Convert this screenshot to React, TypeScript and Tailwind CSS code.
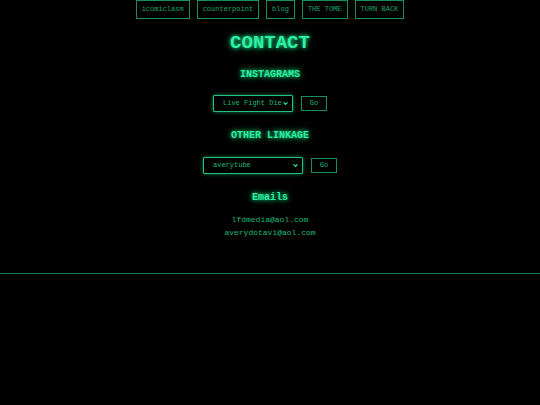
import { ChevronDown } from "lucide-react";

const navItems = ["icomiclasm", "counterpoint", "blog", "THE TOME", "TURN BACK"];

const glow = "[text-shadow:0_0_4px_#19e68c,0_0_8px_rgba(25,230,140,0.5)]";

function LinkPicker({ value, width }: { value: string; width: string }) {
  return (
    <div className="flex items-center justify-center gap-[8px]">
      <div className={`relative flex h-[17px] items-center rounded-[1px] border border-[#1fc47f] shadow-[0_0_4px_rgba(31,196,127,0.6)] ${width}`}>
        <select
          defaultValue={value}
          className="h-full w-full appearance-none bg-transparent pl-[9px] text-[7px] text-[#1fb877] outline-none"
        >
          <option value={value} className="bg-black">{value}</option>
        </select>
        <ChevronDown className="pointer-events-none absolute right-[3px] h-[7px] w-[7px] text-[#2ee69a]" strokeWidth={4} />
      </div>
      <button className="h-[15px] w-[26px] border border-[#178f5c] text-[7px] text-[#1fb877]">Go</button>
    </div>
  );
}

export default function App() {
  return (
    <div className="h-[405px] w-[540px] overflow-hidden bg-black font-['Liberation_Mono',monospace]">
      <nav className="flex justify-center gap-[7px]">
        {navItems.map((item) => (
          <button
            key={item}
            className="h-[19px] border border-[#178f5c] px-[5px] text-[7px] leading-none text-[#1fa46c]"
          >
            {item}
          </button>
        ))}
      </nav>

      <div className="flex flex-col items-center">
        <h1 className={`mt-[13px] text-[19px] font-bold leading-[22px] text-[#2ef0a4] ${glow}`}>CONTACT</h1>

        <h2 className={`mt-[15px] text-[10px] font-bold leading-[12px] text-[#2ef0a4] ${glow}`}>INSTAGRAMS</h2>
        <div className="mt-[14px]">
          <LinkPicker value="Live Fight Die" width="w-[80px]" />
        </div>

        <h2 className={`mt-[18px] text-[10px] font-bold leading-[12px] text-[#2ef0a4] ${glow}`}>OTHER LINKAGE</h2>
        <div className="mt-[15px]">
          <LinkPicker value="averytube" width="w-[100px]" />
        </div>

        <h2 className={`mt-[18px] text-[10px] font-bold leading-[12px] text-[#2ef0a4] ${glow}`}>Emails</h2>
        <div className="mt-[9px] flex flex-col items-center text-[8px] leading-[13px] text-[#1fb877]">
          <span>lfdmedia@aol.com</span>
          <span>averydotavi@aol.com</span>
        </div>
      </div>

      <hr className="mt-[34px] border-t border-[#1a7a50]" />
    </div>
  );
}
